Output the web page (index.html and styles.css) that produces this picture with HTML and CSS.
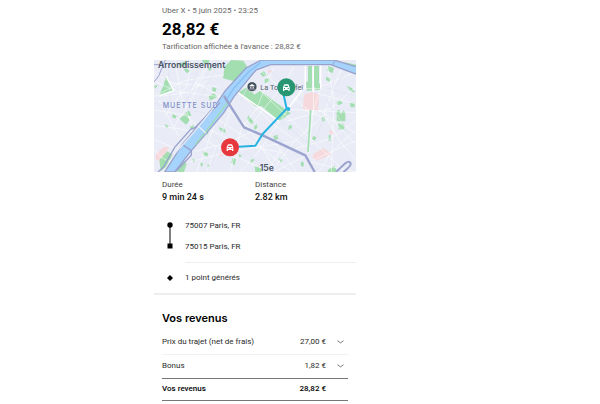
FILE: index.html
```html
<!DOCTYPE html>
<html lang="fr">
<head>
    <meta charset="UTF-8">
    <meta name="viewport" content="width=device-width, initial-scale=1.0">
    <title>Détails de la course</title>
    <link rel="stylesheet" href="styles.css">
</head>
<body>
    <main class="trip">
        <header class="trip-header">
            <p class="muted">Uber X • 5 juin 2025 • 23:25</p>
            <h1>28,82 €</h1>
            <p class="muted">Tarification affichée à l'avance : 28,82 €</p>
        </header>

        <svg class="map" viewBox="0 0 606 336" role="img" aria-label="Carte du trajet">
            <rect width="606" height="336" fill="#e9ecf6"/>

            <!-- Parks -->
            <g fill="#a3deb1">
                <path d="M36 48L60 92L14 108L28 78ZM212 20L232 0L268 2L282 24L240 64L207 55Z"/>
                <path d="M252 98L278 82L302 104L318 92L410 160L376 184L322 138L306 140Z"/>
                <path d="M462 18H474V82H462ZM480 18H495V82H480ZM456 66L474 60V92H458ZM482 58L498 72V90H482Z"/>
                <path d="M0 78L12 74L4 86ZM16 298L40 274L56 284L36 320L20 334Z"/>
                <path d="M74 12L92 4L98 16L80 22ZM94 24L108 32L100 40L90 30ZM144 0H166V10H148ZM160 20L174 26L166 34Z"/>
                <path d="M176 80L188 86L184 96L174 92ZM164 108L180 100L190 110L168 122ZM76 176L94 162L108 180L96 194ZM94 156L106 152L112 166L100 170ZM56 162L68 168L64 176L54 172Z"/>
                <path d="M32 192L44 198L38 206ZM108 200L118 194L120 208L110 208ZM318 40L330 34L338 46L326 50ZM332 58L348 54L344 66L332 70Z"/>
                <path d="M282 166L300 186L294 194L280 178ZM300 200L308 192L310 204L302 212ZM268 90L282 82L286 92L272 100Z"/>
                <path d="M548 152L558 150L560 164L568 150L574 158V184H548ZM502 170H512V184H504ZM552 190L570 192L572 210L554 208ZM546 128L558 120L566 130L554 136Z"/>
                <path d="M578 78L594 84L604 98L590 94ZM588 128H602V142H590ZM522 18L540 24L536 40L520 32ZM516 50L530 56L526 66L516 60Z"/>
                <path d="M570 6L606 14V34L590 28ZM478 228L488 232L482 242L474 236ZM524 226L530 224V242H524ZM402 200L412 194L414 204L404 210Z"/>
                <path d="M156 210L164 218L158 226ZM194 202L212 206L216 218L200 214ZM148 274L162 280L160 290L148 284ZM116 294L124 302L118 308ZM138 306L148 312L142 322ZM160 312L168 316L162 324Z"/>
                <path d="M236 294L246 298L242 316L232 308ZM254 282L264 288L256 294ZM302 318L322 326V336H304ZM358 228L370 224L374 236L362 240ZM442 304L450 308L448 322L440 316ZM480 290L494 286L496 292L482 296Z"/>
                <path d="M288 300L298 294L300 302L290 308ZM374 294L386 300L380 308ZM524 328L542 318L550 336H520ZM74 322L90 302L98 312L90 336H70Z"/>
            </g>

            <!-- Hospitals and stadiums -->
            <g fill="#f5d9dc">
                <path d="M450 104L474 96L496 104L492 152L446 148ZM478 282L508 264L534 282L488 302L476 294Z"/>
                <path d="M6 282L30 260L44 262L38 276L14 302L4 296ZM526 212L536 210L538 222L528 224ZM342 30H354V38H342ZM198 278L208 284L202 292L194 286Z"/>
            </g>

            <!-- Streets -->
            <g fill="none" stroke="#ffffff" stroke-width="2" stroke-opacity=".8">
                <path d="M0 64L68 94L212 112M0 110L90 62L210 44M62 0L82 106L114 200M116 0L96 80L34 166M170 0L112 118L54 210M0 38L56 70L194 80"/>
                <path d="M0 150L96 166L140 206M0 196L112 212M14 120L74 228M0 238L66 266M120 66L206 112M150 30L100 110M26 108L98 98L160 62"/>
                <path d="M272 48L390 160L526 290L574 336M250 94L362 196L456 262M316 30L462 150M358 24L308 146L268 198M420 20L390 72L290 196"/>
                <path d="M454 12V86L404 146L310 280L258 336M478 16V148L464 280M500 14V84L456 218M446 86H500M496 102L606 132M500 80L606 36M496 152L606 220"/>
                <path d="M404 148L606 158M446 150L540 184L606 256M520 14L540 120L532 336M560 30L510 160L558 244L606 300M606 80L540 138L420 246L352 336"/>
                <path d="M212 142L282 200L362 324M188 176L318 260L412 336M168 210L260 254L384 278M142 236L308 320M124 274L228 246L312 206M106 306L232 274L422 244"/>
                <path d="M180 200L128 336M228 158L158 336M264 200L228 336M354 238L428 336M392 250L340 336M424 266L530 236L606 180M478 300L606 242"/>
                <path d="M494 336L532 276L606 208M454 288L360 336M0 266L22 292L54 308M468 306L606 336M398 184L526 146"/>
            </g>
            <g fill="none" stroke="#e0e4f1" stroke-width="2">
                <path d="M0 130L158 160M42 0L48 124M134 22L84 160M190 16L138 116M290 58L260 126M338 20L444 120M520 84L606 108M518 120L590 226"/>
                <path d="M174 226L276 288M210 188L172 320M344 208L438 292M376 180L486 270M510 170L482 250M584 20L540 84M270 270L338 330"/>
            </g>
            <path d="M454 14V84M478 16V96M500 14V84M446 86L402 146M36 48L60 92L14 108M252 98L376 184" fill="none" stroke="#ffffff" stroke-width="4"/>
            <path d="M470 150L462 276" fill="none" stroke="#a3deb1" stroke-width="5"/>

            <!-- Seine -->
            <path d="M606 20L540 0H322L276 24L214 92L190 128L86 252L32 336H62L112 272L208 160L240 110L306 30L350 14L530 14L606 42" fill="#a6d3fb" stroke="#99a2cc" stroke-width="4"/>
            <path d="M320 8L286 34L240 84L218 118" fill="none" stroke="#86bff6" stroke-width="4"/>
            <path d="M220 128L172 194L124 254" fill="none" stroke="#9fdcb3" stroke-width="4"/>
            <path d="M130 196L156 220" fill="none" stroke="#e9ecf6" stroke-width="4"/>
            <path d="M198 128L124 202L110 208L62 262L28 322L12 336" fill="none" stroke="#99a2cc" stroke-width="4"/>
            <path d="M190 130L122 214L54 290" fill="none" stroke="#e9ecf6" stroke-width="4"/>
            <path d="M88 256L112 272V286L64 336" fill="none" stroke="#99a2cc" stroke-width="4"/>

            <!-- Main roads -->
            <g fill="none" stroke="#9ba4cf" stroke-linejoin="round">
                <path d="M210 108L270 202L326 226L454 286L482 336" stroke-width="7"/>
                <path d="M546 336L574 310Q586 300 590 310Q592 318 568 336" stroke-width="6"/>
                <path d="M34 0L14 48L0 66M0 14H18M544 0L534 18" stroke-width="3"/>
            </g>

            <!-- Place names -->
            <text class="map-label" x="12" y="23">Arrondissement</text>
            <text class="map-label" x="317" y="333">15e</text>
            <text class="map-district" x="26" y="144">MUETTE SUD</text>
            <text class="map-place" x="319" y="90">La Tour Eiffel</text>
            <circle cx="294" cy="80" r="15" fill="#45505e" stroke="#ffffff" stroke-width="2"/>
            <path d="M286 77L294 72L302 77V79H286ZM288 80H290V85H288ZM293 80H295V85H293ZM298 80H300V85H298ZM286 86H302V88H286Z" fill="#ffffff"/>

            <!-- Route -->
            <path d="M388 100L398 146L326 222L304 257L228 262" fill="none" stroke="#27b3e2" stroke-width="6" stroke-linejoin="round"/>
            <circle cx="403" cy="147" r="6" fill="#27b3e2"/>
            <circle cx="397" cy="82" r="27" fill="#289672"/>
            <circle cx="228" cy="262" r="27" fill="#e7393d"/>
            <path d="M387 82L391 73H403L407 82V93H403V90H391V93H387Z" fill="#ffffff"/>
            <path d="M391 81L393 77H401L403 81ZM390 84H393V87H390ZM401 84H404V87H401Z" fill="#289672"/>
            <path d="M218 262L222 253H234L238 262V273H234V270H222V273H218Z" fill="#ffffff"/>
            <path d="M222 261L224 257H232L234 261ZM221 264H224V267H221ZM232 264H235V267H232Z" fill="#e7393d"/>
        </svg>

        <dl class="stats">
            <div>
                <dt>Durée</dt>
                <dd>9 min 24 s</dd>
            </div>
            <div>
                <dt>Distance</dt>
                <dd>2.82 km</dd>
            </div>
        </dl>

        <section class="steps">
            <svg class="line-icon" viewBox="0 0 6 27" aria-hidden="true">
                <circle cx="3" cy="3" r="2.700"/>
                <path d="M2.500 3h1v20h-1zM.5 21.500h5v5h-5z"/>
            </svg>
            <div class="addresses">
                <p>75007 Paris, FR</p>
                <p>75015 Paris, FR</p>
            </div>
            <svg class="point-icon" viewBox="0 0 6 6" aria-hidden="true">
                <path d="M3 0l3 3-3 3-3-3z"/>
            </svg>
            <p class="points">1 point générés</p>
        </section>

        <section class="earnings">
            <h2>Vos revenus</h2>
            <table>
                <tbody>
                    <tr>
                        <th scope="row">Prix du trajet (net de frais)</th>
                        <td>27,00 €</td>
                        <td class="toggle">
                            <button type="button" aria-label="Détails du prix du trajet">
                                <svg viewBox="0 0 7 4"><path d="M.5 .7L3.500 2.900 6.500 .7"/></svg>
                            </button>
                        </td>
                    </tr>
                    <tr>
                        <th scope="row">Bonus</th>
                        <td>1,82 €</td>
                        <td class="toggle">
                            <button type="button" aria-label="Détails du bonus">
                                <svg viewBox="0 0 7 4"><path d="M.5 .7L3.500 2.900 6.500 .7"/></svg>
                            </button>
                        </td>
                    </tr>
                </tbody>
                <tfoot>
                    <tr>
                        <th scope="row">Vos revenus</th>
                        <td>28,82 €</td>
                        <td></td>
                    </tr>
                </tfoot>
            </table>
        </section>
    </main>
</body>
</html>
```
FILE: styles.css
```css
* {
    box-sizing: border-box;
}

body {
    display: grid;
    grid-template-columns: 154fr 202fr 244fr;
    margin: 0;
    background-color: #fff;
    color: #2a2a2a;
    font-family: Roboto, "Liberation Sans", sans-serif;
    font-size: 8px;
    line-height: 12px;
}

h1, h2, p, dl, dd {
    margin: 0;
}

.trip {
    grid-column: 2;
    min-width: 0;
}

.trip-header {
    padding: 5px 8px 7px;
}

.muted {
    color: #666;
}

h1 {
    color: #000;
    font-size: 17px;
    line-height: 24px;
}

.map {
    display: block;
    width: 100%;
}

.map-label {
    fill: #4a5264;
    font-family: Inter, sans-serif;
    font-size: 26px;
    font-weight: 600;
}

.map-district {
    fill: #7c8fc6;
    font-family: Inter, sans-serif;
    font-size: 21px;
    font-weight: 500;
    letter-spacing: 3px;
}

.map-place {
    fill: #59616e;
    font-family: Roboto, sans-serif;
    font-size: 22px;
}

.stats {
    display: grid;
    grid-template-columns: 1fr 1fr;
    padding: 7px 8px 0;
}

.stats dt {
    color: #444;
}

.stats dd {
    color: #111;
    font-size: 9px;
    font-weight: 500;
}

.steps {
    display: grid;
    grid-template-columns: 6px 1fr;
    column-gap: 12px;
    align-items: center;
    margin-top: 17px;
    padding-left: 13px;
    border-bottom: 2px solid #eee;
}

.addresses {
    display: grid;
    gap: 9px;
    padding-bottom: 9px;
    border-bottom: 1px solid #eee;
}

.line-icon {
    align-self: start;
    width: 6px;
    margin-top: 2px;
}

.point-icon {
    width: 6px;
}

.points {
    padding: 9px 0;
}

.earnings {
    padding: 15px 8px 0;
}

h2 {
    margin-bottom: 4px;
    color: #000;
    font-family: Inter, "Liberation Sans", sans-serif;
    font-size: 11px;
    font-weight: 600;
    line-height: 16px;
}

table {
    width: 100%;
    border-collapse: collapse;
}

th, td {
    height: 24px;
    padding: 0;
    font-weight: 400;
    text-align: left;
}

td {
    text-align: right;
}

tbody tr + tr {
    border-top: 1px solid #f2f2f2;
}

.toggle {
    width: 22px;
}

button {
    display: flex;
    margin: 0 0 0 auto;
    padding: 4px;
    border: none;
    background: none;
    cursor: pointer;
}

button svg {
    width: 7px;
    fill: none;
    stroke: #777;
}

tfoot tr {
    border-top: 1px solid #777;
    border-bottom: 1px solid #777;
}

tfoot th, tfoot td {
    height: 22px;
    color: #000;
    font-weight: 500;
}
```
